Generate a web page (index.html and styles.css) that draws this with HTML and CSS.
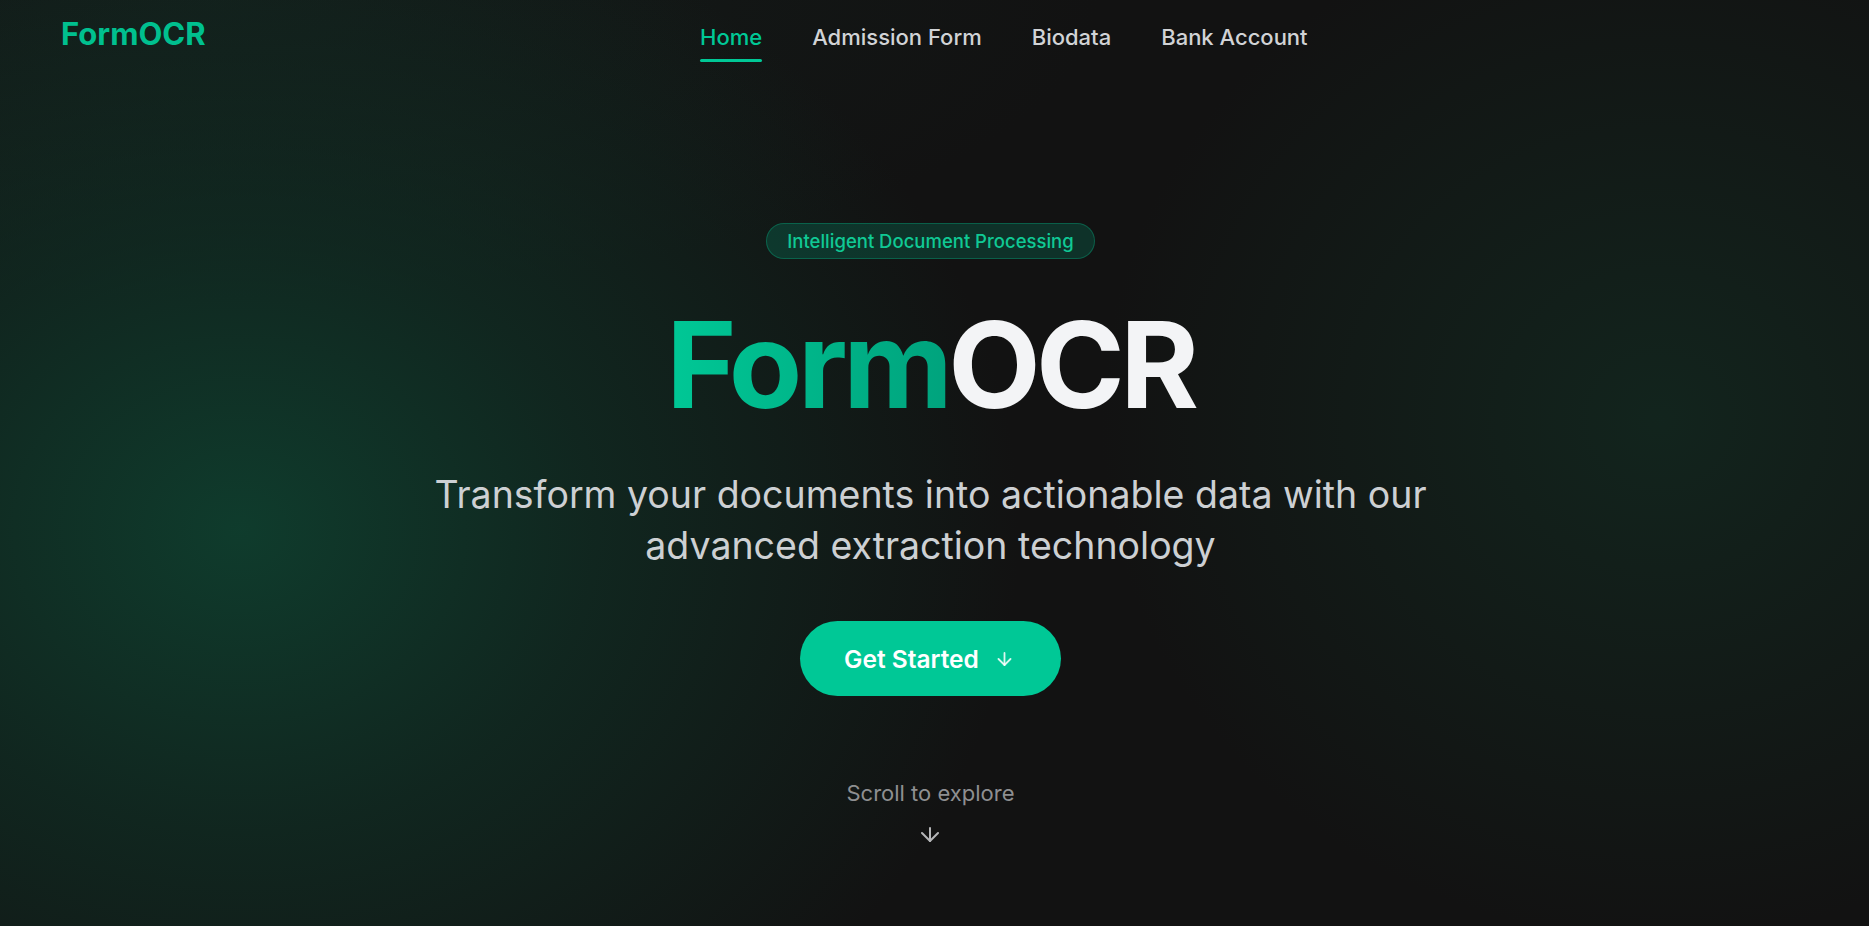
FILE: index.html
```html
<!DOCTYPE html>
<html lang="en">
<head>
<meta charset="utf-8">
<title>FormOCR</title>
<link rel="stylesheet" href="styles.css">
</head>
<body>
<div class="page">
  <header class="header">
    <a class="logo" href="#">FormOCR</a>
    <nav class="nav">
      <a class="nav-link active" href="#">Home</a>
      <a class="nav-link" href="#">Admission Form</a>
      <a class="nav-link" href="#">Biodata</a>
      <a class="nav-link" href="#">Bank Account</a>
    </nav>
    <div class="header-spacer"></div>
  </header>
  <main class="hero">
    <span class="badge">Intelligent Document Processing</span>
    <h1 class="title"><span class="title-accent">Form</span>OCR</h1>
    <p class="subtitle">Transform your documents into actionable data with our advanced extraction technology</p>
    <a class="cta" href="#">
      <span>Get Started</span>
      <svg class="cta-arrow" width="17" height="14" viewBox="0 0 17 14" fill="none" stroke="currentColor" stroke-width="1.8" stroke-linecap="round" stroke-linejoin="round"><path d="M8.5 1v12"/><path d="M2.5 7l6 6 6-6"/></svg>
    </a>
    <div class="scroll">
      <span class="scroll-text">Scroll to explore</span>
      <svg class="scroll-arrow" width="20" height="15" viewBox="0 0 20 15" fill="none" stroke="currentColor" stroke-width="2" stroke-linecap="round" stroke-linejoin="round"><path d="M10 1v13"/><path d="M2 6l8 8 8-8"/></svg>
    </div>
  </main>
</div>
</body>
</html>
```

FILE: styles.css
```css
* {
  box-sizing: border-box;
}

html, body {
  margin: 0;
  padding: 0;
}

body {
  font-family: Inter, "Noto Sans", "Liberation Sans", sans-serif;
  background: #121212;
  color: #f3f4f6;
}

a {
  text-decoration: none;
  color: inherit;
}

.page {
  height: 926px;
  overflow: hidden;
  background:
    radial-gradient(ellipse 780px 660px at 240px 530px, rgba(15, 62, 46, 0.95) 0%, rgba(15, 55, 42, 0.55) 45%, rgba(18, 18, 18, 0) 100%),
    radial-gradient(ellipse 560px 520px at 1660px 420px, rgba(18, 44, 34, 0.7) 0%, rgba(18, 18, 18, 0) 100%),
    radial-gradient(ellipse 900px 300px at 200px 0px, rgba(20, 34, 30, 0.6) 0%, rgba(18, 18, 18, 0) 100%),
    #121212;
  display: flex;
  flex-direction: column;
}

.header {
  display: flex;
  justify-content: space-between;
  align-items: flex-start;
  padding: 16px 61px 0 61px;
}

.logo {
  font-size: 31px;
  line-height: 36px;
  font-weight: 700;
  color: #00c08f;
}

.nav {
  display: flex;
  gap: 50px;
  margin-top: 8px;
}

.nav-link {
  position: relative;
  display: block;
  font-size: 22px;
  line-height: 26px;
  font-weight: 500;
  color: #d1d3d6;
  padding-bottom: 12px;
}

.nav-link.active {
  color: #00c896;
}

.nav-link.active::after {
  content: "";
  position: absolute;
  left: 0;
  right: 0;
  bottom: 0;
  height: 3px;
  border-radius: 2px;
  background: #00c896;
}

.header-spacer {
  width: 6px;
}

.hero {
  display: flex;
  flex-direction: column;
  align-items: center;
  text-align: center;
  padding: 161px 8px 0 0;
}

.badge {
  display: inline-flex;
  align-items: center;
  height: 36px;
  padding: 0 20px;
  border-radius: 18px;
  font-size: 18.5px;
  font-weight: 500;
  color: #10c995;
  background: rgba(0, 200, 150, 0.18);
  border: 1px solid rgba(0, 200, 150, 0.3);
}

.title {
  margin: 40px 0 0 0;
  font-size: 120px;
  line-height: 132px;
  font-weight: 700;
  letter-spacing: -4.5px;
  color: #f3f4f6;
}

.title-accent {
  background: linear-gradient(90deg, #00c896 0%, #00a37d 100%);
  -webkit-background-clip: text;
  background-clip: text;
  color: transparent;
}

.subtitle {
  margin: 38px 0 0 0;
  max-width: 1070px;
  font-size: 37.5px;
  line-height: 51px;
  font-weight: 400;
  color: #cdd0d3;
}

.cta {
  margin-top: 50px;
  display: inline-flex;
  align-items: center;
  gap: 17px;
  height: 75px;
  padding: 0 48px 0 44px;
  border-radius: 38px;
  background: #00c896;
  color: #ffffff;
  font-size: 24.5px;
  font-weight: 600;
}

.cta-arrow {
  color: rgba(255, 255, 255, 0.85);
}

.scroll {
  margin-top: 84px;
  display: flex;
  flex-direction: column;
  align-items: center;
  gap: 21px;
}

.scroll-text {
  font-size: 22px;
  line-height: 26px;
  color: #8e8f91;
}

.scroll-arrow {
  color: #b5b6b8;
}
```
